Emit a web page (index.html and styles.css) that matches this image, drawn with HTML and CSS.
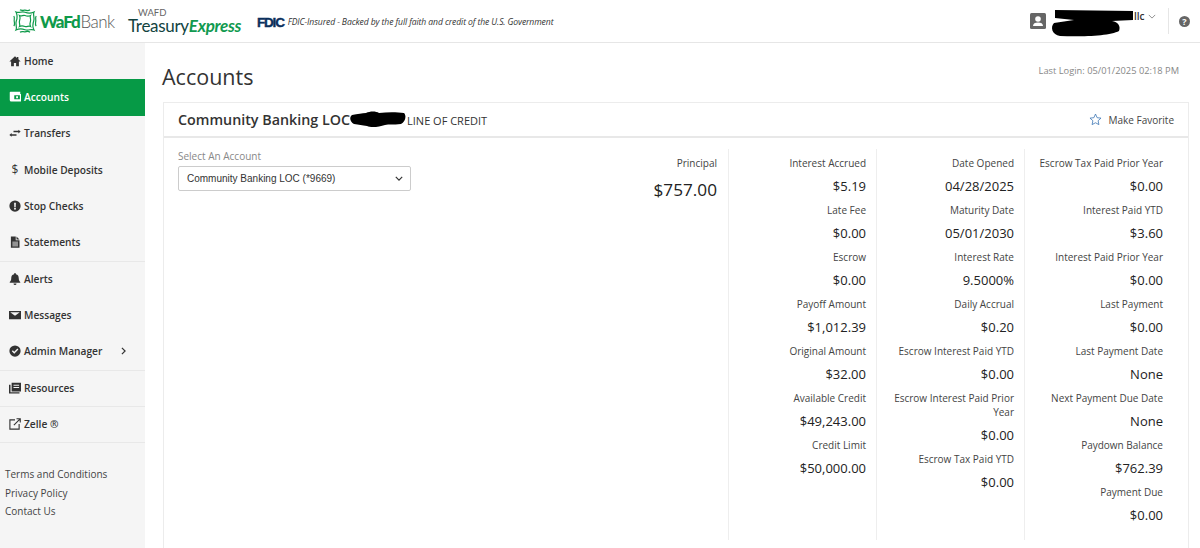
FILE: index.html
```html
<!DOCTYPE html>
<html lang="en">
<head>
    <meta charset="UTF-8">
    <meta name="viewport" content="width=device-width, initial-scale=1.0">
    <title>Accounts</title>
    <link rel="stylesheet" href="styles.css">
</head>

<body>

<!-- Top bar -->
<header class="topbar">
    <div class="brand">
        <svg class="brand-mark" viewBox="0 0 24 24" width="24" height="24" fill="none" stroke="#0f9a4a" stroke-width="1.2">
            <path d="M3 3c3 1.500 5.500-1 9 .3s6 1.200 9-.3c-1.500 3 1 5.500-.3 9s-1.200 6 .3 9c-3-1.500-5.500 1-9-.3s-6-1.200-9 .3c1.500-3-1-5.500.3-9s1.200-6-.3-9z"/>
            <path d="M6.500 6.500c2 1 3.500-.7 5.500 0s3.500 1 5.500 0c-1 2 .7 3.500 0 5.500s-1 3.500 0 5.500c-2-1-3.500.7-5.500 0s-3.500-1-5.500 0c1-2-.7-3.500 0-5.500s1-3.500 0-5.500z"/>
            <path d="M.8 7c1.200 1.700.2 3.300.4 5s1 3.300-.4 5M23.200 7c-1.200 1.700-.2 3.300-.4 5s-1 3.300.4 5M7 .8c1.700 1.200 3.300.2 5 .4s3.300 1 5-.4M7 23.200c1.700-1.200 3.300-.2 5-.4s3.300-1 5 .4"/>
        </svg>
        <span class="brand-wafd">WaFd</span>
        <span class="brand-bank">Bank</span>
    </div>
    <div class="treasury">
        <span class="treasury-top">WAFD</span>
        <span class="treasury-name">Treasury<em>Express</em></span>
    </div>
    <div class="fdic">
        <strong>FDIC</strong>
        <em>FDIC-Insured - Backed by the full faith and credit of the U.S. Government</em>
    </div>
    <div class="user-area">
        <svg class="user-icon" viewBox="0 0 16 16" width="16" height="16">
            <rect width="16" height="16" rx="1.5" fill="#666"/>
            <circle cx="8" cy="6" r="2.8" fill="#fff"/>
            <path d="M3 13c0-2.500 2-3.500 5-3.500s5 1 5 3.500z" fill="#fff"/>
        </svg>
        <span class="user-name">llc</span>
        <svg class="user-caret" viewBox="0 0 10 6" width="8" height="5" fill="none" stroke="#777" stroke-width="1">
            <path d="M1 1l4 4 4-4"/>
        </svg>
        <!-- blacked out name in the screenshot -->
        <svg class="blot-user" viewBox="0 0 84 28" width="84" height="28">
            <path d="M5 1l78 1v9l-21 1c6 1 9 5 7 10-9 5-39 6-59 5-8-1-10-9-6-13l20-3-19-2z"/>
        </svg>
    </div>
    <div class="help-area">
        <span class="help-icon">?</span>
    </div>
</header>

<div class="layout">
    <!-- Side navigation -->
    <nav class="sidebar">
        <ul class="nav-list">
            <li class="nav-item">
                <svg class="nav-icon" viewBox="0 0 16 16"><path d="M8 1.500L.5 8.500h2.300V15h3.700v-4.500h3V15h3.700V8.500h2.300l-3-2.800V2.500h-2v1.400z"/></svg>
                Home
            </li>
            <li class="nav-item active">
                <svg class="nav-icon" viewBox="0 0 16 16"><path fill-rule="evenodd" d="M2 1h13v3h1v10H3a2 2 0 0 1-2-2V2a1 1 0 0 1 1-1zM7 5.500v5.500h7.500V5.500zm2.500 1.500h2.500v2.500H9.500z"/></svg>
                Accounts
            </li>
            <li class="nav-item">
                <svg class="nav-icon" viewBox="0 0 16 16"><path d="M6 5h6.500V3.500L15.500 6l-3 2.500V7H6zM10 9.500H3.500V8L.5 10.500l3 2.500v-1.500H10z"/></svg>
                Transfers
            </li>
            <li class="nav-item">
                <span class="nav-icon nav-glyph">$</span>
                Mobile Deposits
            </li>
            <li class="nav-item">
                <svg class="nav-icon" viewBox="0 0 16 16"><path fill-rule="evenodd" d="M8 .5a7.500 7.500 0 1 1 0 15 7.500 7.500 0 0 1 0-15zM6.800 3.500l.3 6h1.800l.3-6zM8 10.300a1.300 1.300 0 1 0 0 2.600 1.300 1.300 0 0 0 0-2.600z"/></svg>
                Stop Checks
            </li>
            <li class="nav-item">
                <svg class="nav-icon" viewBox="0 0 16 16"><path fill-rule="evenodd" d="M2.500.5H9v5h5V15.500H2.500zM10 .5l4 4h-4zM4.500 7.500v1.200h7.500V7.500zm0 2.500v1.200h7.500V10zm0 2.500v1.200h7.500v-1.200z"/></svg>
                Statements
            </li>
            <li class="nav-item divided">
                <svg class="nav-icon" viewBox="0 0 16 16"><path d="M8 0a1.200 1.200 0 0 1 1.200 1.200v.6c2.600.5 3.800 2.500 3.800 5.200 0 3 1.200 4 2 5v1H1v-1c.8-1 2-2 2-5 0-2.700 1.200-4.700 3.800-5.200v-.6A1.200 1.200 0 0 1 8 0zM6 14h4a2 2 0 0 1-4 0z"/></svg>
                Alerts
            </li>
            <li class="nav-item">
                <svg class="nav-icon" viewBox="0 0 16 16"><path fill-rule="evenodd" d="M0 2.500h16v11H0zM2 4.500l6 4.500 6-4.500v-.3H2z"/></svg>
                Messages
            </li>
            <li class="nav-item">
                <svg class="nav-icon" viewBox="0 0 16 16"><path fill-rule="evenodd" d="M8 .5a7.500 7.500 0 1 1 0 15 7.500 7.500 0 0 1 0-15zM3.800 8.300L7 11.500l5.500-5.500-1.300-1.300L7 8.900 5.100 7z"/></svg>
                Admin Manager
                <svg class="nav-arrow" viewBox="0 0 6 10" width="5" height="8" fill="none" stroke="#333" stroke-width="1.5"><path d="M1 1l4 4-4 4"/></svg>
            </li>
            <li class="nav-item divided">
                <svg class="nav-icon" viewBox="0 0 16 16"><path fill-rule="evenodd" d="M3.500 1H16v11.500H3.500zM6 3.500v1.500h7.500V3.500zm0 3V8h7.500V6.500zM0 3.500h2V13.500h12v1.800H0z"/></svg>
                Resources
            </li>
            <li class="nav-item divided">
                <svg class="nav-icon nav-icon-line" viewBox="0 0 16 16"><path d="M8 2.500H1.200v12.300h12.300V8M6.500 9.500L14.500 1.500M10 1h5v5"/></svg>
                Zelle ®
            </li>
        </ul>
        <ul class="foot-links">
            <li>Terms and Conditions</li>
            <li>Privacy Policy</li>
            <li>Contact Us</li>
        </ul>
    </nav>

    <main class="content">
        <div class="page-head">
            <h1>Accounts</h1>
            <span class="last-login">Last Login: 05/01/2025 02:18 PM</span>
        </div>

        <section class="card">
            <div class="card-head">
                <h2>Community Banking LOC</h2>
                <svg class="blot-title" viewBox="0 0 56 17" width="56" height="17">
                    <path d="M2 4c6-1 10-2 14-2 4-2 10-2 13 0 8-1 18-1 25 0 3 3 1 9-3 11-8 1-12 0-16 1-6 2-14 3-18 1-5-1-8-1-13-2-4-2-5-7-2-9z"/>
                </svg>
                <span class="card-type">LINE OF CREDIT</span>
                <span class="favorite">
                    <svg viewBox="0 0 16 16" width="13" height="13" fill="none" stroke="#3f78b5" stroke-width="1"><path d="M8 1.300l2 4.500 4.800.5-3.600 3.200 1 4.800L8 12l-4.200 2.300 1-4.800L1.200 6.300 6 5.800z"/></svg>
                    Make Favorite
                </span>
            </div>
            <div class="card-body">
                <div class="account-select">
                    <label class="select-label">Select An Account</label>
                    <div class="select-box">
                        Community Banking LOC (*9669)
                        <svg viewBox="0 0 10 6" width="8" height="5" fill="none" stroke="#333" stroke-width="1.5"><path d="M1 1l4 4 4-4"/></svg>
                    </div>
                </div>

                <div class="col-principal">
                    <div class="label">Principal</div>
                    <div class="principal-value">$757.00</div>
                </div>

                <div class="col">
                    <div class="label">Interest Accrued</div><div class="value">$5.19</div>
                    <div class="label">Late Fee</div><div class="value">$0.00</div>
                    <div class="label">Escrow</div><div class="value">$0.00</div>
                    <div class="label">Payoff Amount</div><div class="value">$1,012.39</div>
                    <div class="label">Original Amount</div><div class="value">$32.00</div>
                    <div class="label">Available Credit</div><div class="value">$49,243.00</div>
                    <div class="label">Credit Limit</div><div class="value">$50,000.00</div>
                </div>

                <div class="col">
                    <div class="label">Date Opened</div><div class="value">04/28/2025</div>
                    <div class="label">Maturity Date</div><div class="value">05/01/2030</div>
                    <div class="label">Interest Rate</div><div class="value">9.5000%</div>
                    <div class="label">Daily Accrual</div><div class="value">$0.20</div>
                    <div class="label">Escrow Interest Paid YTD</div><div class="value">$0.00</div>
                    <div class="label">Escrow Interest Paid Prior Year</div><div class="value">$0.00</div>
                    <div class="label">Escrow Tax Paid YTD</div><div class="value">$0.00</div>
                </div>

                <div class="col">
                    <div class="label">Escrow Tax Paid Prior Year</div><div class="value">$0.00</div>
                    <div class="label">Interest Paid YTD</div><div class="value">$3.60</div>
                    <div class="label">Interest Paid Prior Year</div><div class="value">$0.00</div>
                    <div class="label">Last Payment</div><div class="value">$0.00</div>
                    <div class="label">Last Payment Date</div><div class="value">None</div>
                    <div class="label">Next Payment Due Date</div><div class="value">None</div>
                    <div class="label">Paydown Balance</div><div class="value">$762.39</div>
                    <div class="label">Payment Due</div><div class="value">$0.00</div>
                </div>
            </div>
        </section>
    </main>
</div>

</body>
</html>
```

FILE: styles.css
```css
html, body {
    height: 100%;
}

body {
    font-family: "Open Sans", sans-serif;
    margin: 0;
    padding: 0;
    background-color: #fff;
    color: #333;
    overflow: hidden;
}

ul {
    list-style: none;
    margin: 0;
    padding: 0;
}

/* Top bar */
.topbar {
    box-sizing: border-box;
    height: 43px;
    display: flex;
    align-items: center;
    border-bottom: 1px solid #e6e6e6;
}

.brand {
    display: flex;
    align-items: center;
    margin-left: 13px;
    width: 115px;
    flex: none;
}

.brand-mark {
    flex: none;
    margin-right: 3px;
}

.brand-wafd {
    font-family: Lato, sans-serif;
    font-weight: 900;
    font-size: 17px;
    letter-spacing: -1.1px;
    color: #0f9a4a;
}

.brand-bank {
    font-family: Lato, sans-serif;
    font-weight: 300;
    font-size: 17px;
    letter-spacing: -0.6px;
    color: #555;
    margin-left: 1px;
}

.treasury {
    width: 129px;
    flex: none;
    display: flex;
    flex-direction: column;
    font-family: Lato, sans-serif;
}

.treasury-top {
    font-size: 9.5px;
    color: #666;
    margin-left: 10px;
    line-height: 8px;
}

.treasury-name {
    font-size: 17px;
    letter-spacing: -0.3px;
    color: #12433f;
    line-height: 17px;
}

.treasury-name em {
    color: #119a50;
    font-weight: 700;
}

.fdic {
    display: flex;
    align-items: center;
    gap: 4px;
    padding-top: 2px;
    color: #333;
}

.fdic strong {
    font-family: "Liberation Sans", sans-serif;
    font-size: 13.5px;
    font-weight: 700;
    letter-spacing: -1.2px;
    color: #0b2f5c;
    -webkit-text-stroke: 0.4px #0b2f5c;
}

.fdic em {
    font-size: 8.6px;
    letter-spacing: -0.1px;
}

.user-area {
    position: relative;
    margin-left: auto;
    display: flex;
    align-items: center;
    width: 127px;
    height: 30px;
}

.user-icon {
    flex: none;
    margin-right: 88px;
}

.user-name {
    font-size: 10px;
    font-weight: 600;
    margin-top: -10px;
}

.user-caret {
    margin-left: 3px;
    margin-top: -10px;
}

.blot-user {
    position: absolute;
    left: 20px;
    top: 3px;
}

.help-area {
    width: 31px;
    height: 26px;
    margin-left: 11px;
    border-left: 1px solid #e6e6e6;
    display: flex;
    align-items: center;
    justify-content: center;
}

.help-icon {
    width: 11px;
    height: 11px;
    line-height: 11px;
    border-radius: 50%;
    background-color: #666;
    color: #fff;
    font-size: 9px;
    font-weight: 700;
    text-align: center;
}

.layout {
    display: flex;
    height: 505px;
}

/* Side navigation */
.sidebar {
    width: 145px;
    flex: none;
    background-color: #f5f5f5;
}

.nav-item {
    height: 36.3px;
    box-sizing: border-box;
    display: flex;
    align-items: center;
    padding: 0 0 1px 9px;
    font-size: 10.2px;
    font-weight: 600;
    color: #333;
}

.nav-item.active {
    background-color: #069a46;
    color: #fff;
}

.nav-item.divided {
    border-top: 1px solid #e8e8e8;
}

.nav-icon {
    width: 12px;
    height: 12px;
    flex: none;
    margin-right: 3px;
    fill: #333;
}

.nav-item.active .nav-icon {
    fill: #fff;
}

.nav-icon-line {
    fill: none;
    stroke: #333;
    stroke-width: 1.5;
}

.nav-glyph {
    font-size: 12px;
    font-weight: 500;
    line-height: 12px;
    text-align: center;
}

.nav-arrow {
    margin-left: 19px;
}

.foot-links {
    border-top: 1px solid #e8e8e8;
    padding: 22px 0 0 5px;
    font-size: 10px;
    color: #444;
}

.foot-links li {
    height: 18.5px;
    line-height: 18.5px;
}

/* Main content */
.content {
    flex: 1;
    min-width: 0;
    padding: 0 11px 0 18px;
}

.page-head {
    height: 59px;
    display: flex;
    justify-content: space-between;
}

.page-head h1 {
    margin: 18px 0 0 -1px;
    font-size: 21.5px;
    font-weight: 400;
    line-height: 32px;
    color: #333;
}

.last-login {
    margin: 21px 10px 0 0;
    font-size: 9.3px;
    line-height: 14px;
    color: #888;
}

/* runs down to the bottom of the window */
.card {
    border: 1px solid #ececec;
    border-bottom: none;
    height: 445px;
}

.card-head {
    height: 33px;
    display: flex;
    align-items: center;
    padding: 0 14px 0 14px;
    border-bottom: 2px solid #e8e8e8;
}

.card-head h2 {
    margin: 0;
    font-size: 14.3px;
    font-weight: 600;
    color: #333;
}

.blot-title {
    flex: none;
}

.card-type {
    font-size: 11px;
    font-weight: 500;
    margin-left: 1px;
    margin-top: 1px;
}

.favorite {
    margin-left: auto;
    display: flex;
    align-items: center;
    gap: 6px;
    font-size: 10px;
    color: #444;
}

.card-body {
    display: flex;
    padding: 11px 0 0 14px;
    height: 391px;
}

.account-select {
    width: 233px;
    flex: none;
}

.select-label {
    display: block;
    font-size: 10px;
    color: #888;
    line-height: 14px;
}

.select-box {
    box-sizing: border-box;
    margin-top: 3px;
    height: 25px;
    display: flex;
    align-items: center;
    justify-content: space-between;
    padding: 0 7px 0 8px;
    border: 1px solid #ccc;
    border-radius: 2px;
    font-family: "Liberation Sans", sans-serif;
    font-size: 10px;
    color: #333;
}

.col-principal {
    width: 306px;
    flex: none;
    box-sizing: border-box;
    text-align: right;
    padding-top: 7px;
}

.principal-value {
    font-size: 17.2px;
    line-height: 24px;
    margin-top: 8px;
    color: #222;
}

.col {
    width: 148px;
    flex: none;
    box-sizing: border-box;
    padding: 7px 10px 0 0;
    text-align: right;
    border-left: 1px solid #eee;
}

.col:last-child {
    padding-right: 9px;
}

.col-principal + .col {
    margin-left: 11px;
}

.label {
    font-size: 10px;
    line-height: 14px;
    color: #444;
}

.value {
    font-size: 13px;
    line-height: 18px;
    margin: 7px 0 8px;
    color: #222;
}
```
